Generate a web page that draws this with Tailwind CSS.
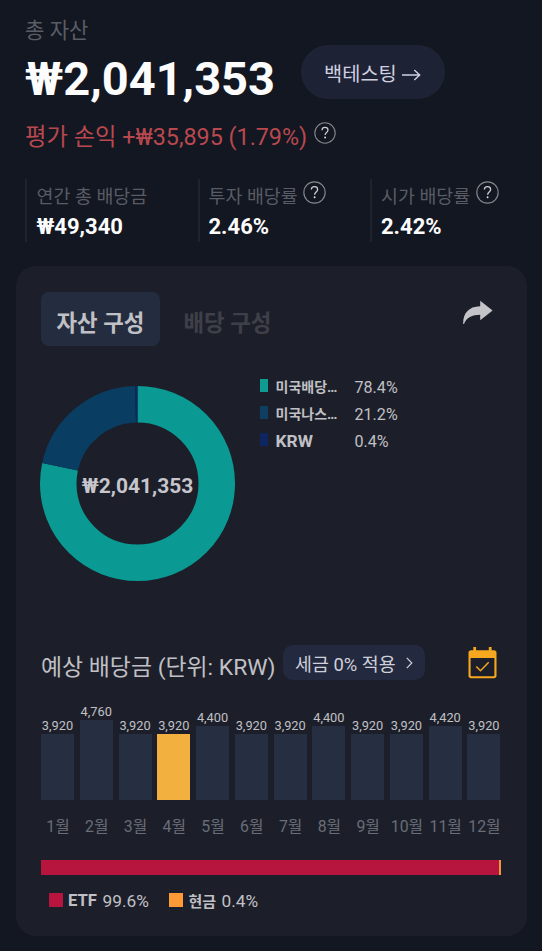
<!DOCTYPE html>
<html lang="ko">
<head>
<meta charset="utf-8">
<title>총 자산</title>
<script src="https://cdn.jsdelivr.net/npm/@tailwindcss/browser@4"></script>
</head>
<body class="bg-[#131721] w-[542px] h-[951px] overflow-hidden font-['Roboto','Noto_Sans_CJK_KR',sans-serif] whitespace-nowrap">
<svg class="hidden">
  <symbol id="help" viewBox="0 0 22 22">
    <circle cx="11" cy="11" r="10.2" fill="none" stroke="#85868c" stroke-width="1.1"/>
    <path d="M8 8.2C8 6.4 9.3 5.4 11 5.4s3 1.1 3 2.7c0 2.3-2.9 2.5-2.9 5" fill="none" stroke="#d0d0d4" stroke-width="1.2"/>
    <circle cx="11.1" cy="15.5" r=".9" fill="#e2e2e6"/>
  </symbol>
</svg>

<header class="pt-[17px] pl-[25px]">
  <div class="h-[28px] leading-[28px] text-[21.1px] text-[#5a5d66]">총 자산</div>
  <div class="flex items-start">
    <h1 class="w-[276px] pt-[7px] leading-[53px] h-[53px] text-[47px] font-bold text-[#fcfcfd]">₩2,041,353</h1>
    <button class="w-[144px] h-[54px] rounded-full bg-[#1e2235] flex items-center pl-[23px] pt-[6px] text-[19.8px] leading-[26px] text-[#cfd0e0]">백테스팅
      <svg class="w-[19px] h-[12px] ml-[5px] -mt-[1px]" viewBox="0 0 19 12" fill="none" stroke="#cfd0e0" stroke-width="1.4"><path d="M0 6h17.5M12.3 .9L17.7 6l-5.4 5.1"/></svg>
    </button>
  </div>
  <div class="flex items-start mt-[20px] h-[34px]">
    <span class="pt-[1px] text-[23.3px] leading-[34px] text-[#b9484f]">평가 손익 +₩35,895 (1.79%)</span>
    <svg class="w-[22px] h-[22px] ml-[7px] mt-[3px]"><use href="#help"/></svg>
  </div>
</header>

<section class="mt-[26px] ml-[25px] flex h-[63px]">
  <div class="w-[172.5px] border-l-2 border-[#20232c] pl-[9.5px] pt-[2px]">
    <div class="h-[32px] leading-[31px] text-[18.4px] text-[#595c65]">연간 총 배당금</div>
    <div class="leading-[28px] text-[22px] font-bold text-[#fcfcfd]">₩49,340</div>
  </div>
  <div class="w-[172.5px] border-l-2 border-[#20232c] pl-[9px] pt-[2px]">
    <div class="h-[32px] leading-[31px] text-[18.4px] text-[#595c65] flex">투자 배당률<svg class="w-[23px] h-[23px] ml-[5.5px]"><use href="#help"/></svg></div>
    <div class="leading-[28px] text-[22px] font-bold text-[#fcfcfd]">2.46%</div>
  </div>
  <div class="border-l-2 border-[#20232c] pl-[9px] pt-[2px]">
    <div class="h-[32px] leading-[31px] text-[18.4px] text-[#595c65] flex">시가 배당률<svg class="w-[23px] h-[23px] ml-[5.5px]"><use href="#help"/></svg></div>
    <div class="leading-[28px] text-[22px] font-bold text-[#fcfcfd]">2.42%</div>
  </div>
</section>

<main class="mt-[24px] ml-[16px] w-[511px] h-[670px] rounded-[20px] bg-[#1c1f2a] pt-[25.5px] pl-[25px] pr-[26px] text-[#c0c0c5]">
  <div class="flex h-[55px]">
    <div class="w-[119px] h-[54.5px] rounded-[8px] bg-[#242d40] pl-[15.5px] pt-[8px] leading-[47px] text-[22.4px] font-bold">자산 구성</div>
    <div class="pl-[23.5px] pt-[8px] leading-[47px] text-[22.4px] font-bold text-[#3e4049]">배당 구성</div>
    <svg class="w-[30px] h-[25px] ml-auto mr-[8.5px] mt-[8px]" viewBox="0 0 30 25" fill="#c4c4c8"><path d="M17.2 .8L29.6 10.6 17.2 20.2V14.8C9 14.8 3.5 17.5 1 24H.2C-.2 14 5 6.4 17.2 6.2z"/></svg>
  </div>

  <div class="flex mt-[38.5px] h-[196px]">
    <div class="relative w-[196px] h-[196px] -ml-[1.5px]">
      <svg class="w-[196px] h-[196px] -rotate-90" viewBox="0.5 0.5 196 196" fill="none" stroke-width="36.5">
        <circle cx="98" cy="98" r="79.25" stroke="#0a9a93" pathLength="100" stroke-dasharray="78.4 21.6"/>
        <circle cx="98" cy="98" r="79.25" stroke="#093d61" pathLength="100" stroke-dasharray="21.2 78.8" stroke-dashoffset="-78.4"/>
        <circle cx="98" cy="98" r="79.25" stroke="#0a2a60" pathLength="100" stroke-dasharray="0.4 99.6" stroke-dashoffset="-99.6"/>
      </svg>
      <div class="absolute inset-0 pt-[3px] leading-[196px] text-center text-[21px] font-bold text-[#c6c6cc]">₩2,041,353</div>
    </div>
    <div class="ml-[24.5px] -mt-[11.5px] leading-[27.2px]">
      <div class="flex h-[27.2px]"><i class="w-[8px] h-[13px] mt-[5.5px] bg-[#0f9b92]"></i><b class="w-[79px] ml-[7.5px] text-[14px]">미국배당…</b><span class="text-[16.1px]">78.4%</span></div>
      <div class="flex h-[27.2px]"><i class="w-[8px] h-[13px] mt-[5.5px] bg-[#0e3f61]"></i><b class="w-[79px] ml-[7.5px] text-[14px]">미국나스…</b><span class="text-[16.1px]">21.2%</span></div>
      <div class="flex h-[27.2px]"><i class="w-[8px] h-[13px] mt-[5.5px] bg-[#0d2560]"></i><b class="w-[79px] ml-[7.5px] text-[17.4px]">KRW</b><span class="text-[16.1px]">0.4%</span></div>
    </div>
  </div>

  <div class="flex mt-[64px] h-[36px]">
    <h2 class="w-[242px] pt-[5px] leading-[36px] text-[22.9px]">예상 배당금 (단위: KRW)</h2>
    <button class="w-[142px] h-[35px] rounded-[10px] bg-[#232a3f] flex items-center pl-[12px] pt-[5px] text-[18.4px] leading-[32px] text-[#d0d0da]">세금 0% 적용
      <svg class="w-[7px] h-[12px] ml-[10px] -mt-[5px]" viewBox="0 0 7 12" fill="none" stroke="#d0d0da" stroke-width="1.2"><path d="M.8 .8L5.8 6 .8 11.2"/></svg>
    </button>
    <svg class="w-[29px] h-[33px] ml-auto mr-[4.5px] mt-[1px]" viewBox="0 0 29 33"><path d="M5.3 1h2.8v3.2h12.7V1h2.8v3.2h2.2A2.7 2.7 0 0 1 28.5 7v22.6a2.7 2.7 0 0 1-2.7 2.7H3.2A2.7 2.7 0 0 1 .5 29.6V7a2.7 2.7 0 0 1 2.7-2.8h2.1zM2.6 12v17.2a1 1 0 0 0 1 1h21.8a1 1 0 0 0 1-1V12z" fill="#f5a71f" fill-rule="evenodd"/><path d="M8.3 20.5l4.2 4.2 8.2-8.4" fill="none" stroke="#f5a71f" stroke-width="1.5"/></svg>
  </div>

  <div id="chart" class="flex gap-[5.77px] h-[153.5px] -mr-[1px] items-end"></div>

  <div class="flex w-[460px] h-[15.5px] mt-[25px]"><div class="flex-1 bg-[#b7153d]"></div><div class="w-[2px] bg-[#f0963f]"></div></div>
  <div class="flex mt-[12px] h-[26px] pl-[8px] leading-[26px]">
    <i class="w-[14px] h-[14px] mt-[5.5px] bg-[#b7153d]"></i><b class="ml-[5px] w-[34.5px] pt-[1px] text-[16.6px]">ETF</b><span class="w-[66px] pt-[0.5px] text-[17.3px]">99.6%</span>
    <i class="w-[14px] h-[14px] mt-[5.5px] bg-[#ff9a36]"></i><b class="ml-[6px] w-[33px] pt-[2px] text-[15px]">현금</b><span class="pt-[0.5px] text-[17.3px]">0.4%</span>
  </div>
</main>
<script>
const bars = [[3920,66],[4760,80],[3920,66],[3920,66],[4400,74],[3920,66],[3920,66],[4400,74],[3920,66],[3920,66],[4420,74],[3920,66]];
document.getElementById('chart').innerHTML = bars.map(([v,h],i) =>
  `<div class="w-[33px] shrink-0 flex flex-col items-center"><span class="text-[12.8px] leading-[17px]">${v.toLocaleString('en-US')}</span><div class="w-full ${i===3?'bg-[#f2b13e]':'bg-[#262e42]'}" style="height:${h}px"></div><span class="h-[34.5px] pt-[13px] pl-[1px] leading-[28px] text-[15.8px] text-[#696d77]">${i+1}월</span></div>`).join('');
</script>
</body>
</html>
